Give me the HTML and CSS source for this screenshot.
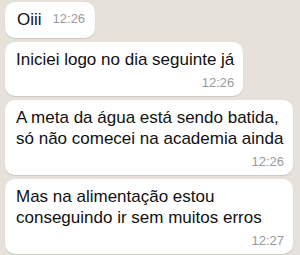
FILE: index.html
```html
<!DOCTYPE html>
<html lang="pt">
<head>
<meta charset="utf-8">
<link rel="stylesheet" href="styles.css">
</head>
<body>
<div class="chat">
  <div class="bubble inline">
    <span class="text">Oiii</span>
    <span class="time">12:26</span>
  </div>
  <div class="bubble">
    <div class="text">Iniciei logo no dia seguinte já</div>
    <div class="time">12:26</div>
  </div>
  <div class="bubble wide">
    <div class="text">A meta da água está sendo batida,<br>só não comecei na academia ainda</div>
    <div class="time">12:26</div>
  </div>
  <div class="bubble wide">
    <div class="text">Mas na alimentação estou<br>conseguindo ir sem muitos erros</div>
    <div class="time">12:27</div>
  </div>
</div>
</body>
</html>
```
FILE: styles.css
```css
html, body {
  margin: 0;
  padding: 0;
  background: #e6e1da;
}
body {
  width: 300px;
  height: 255px;
  overflow: hidden;
  font-family: "Liberation Sans", Arial, sans-serif;
}
.chat {
  display: flex;
  flex-direction: column;
  align-items: flex-start;
  gap: 4px;
  padding: 2px 7px 0 5px;
}
.bubble {
  background: #ffffff;
  border-radius: 10px;
  box-shadow: 0 1px 1px rgba(0, 0, 0, 0.12);
  padding: 7px 9px 6px 11px;
  display: flex;
  flex-direction: column;
  align-items: flex-end;
}
.bubble.wide {
  align-self: stretch;
}
.bubble .text {
  align-self: flex-start;
  font-size: 17px;
  line-height: 21px;
  color: #111111;
}
.time {
  font-size: 13px;
  line-height: 15px;
  color: #9a9a9a;
  margin-top: 5px;
}
.bubble.inline {
  flex-direction: row;
  align-items: baseline;
  gap: 11px;
  padding: 7px 10px 8px 12px;
}
.bubble.inline .time {
  margin-top: 0;
  position: relative;
  top: 2px;
}
```
